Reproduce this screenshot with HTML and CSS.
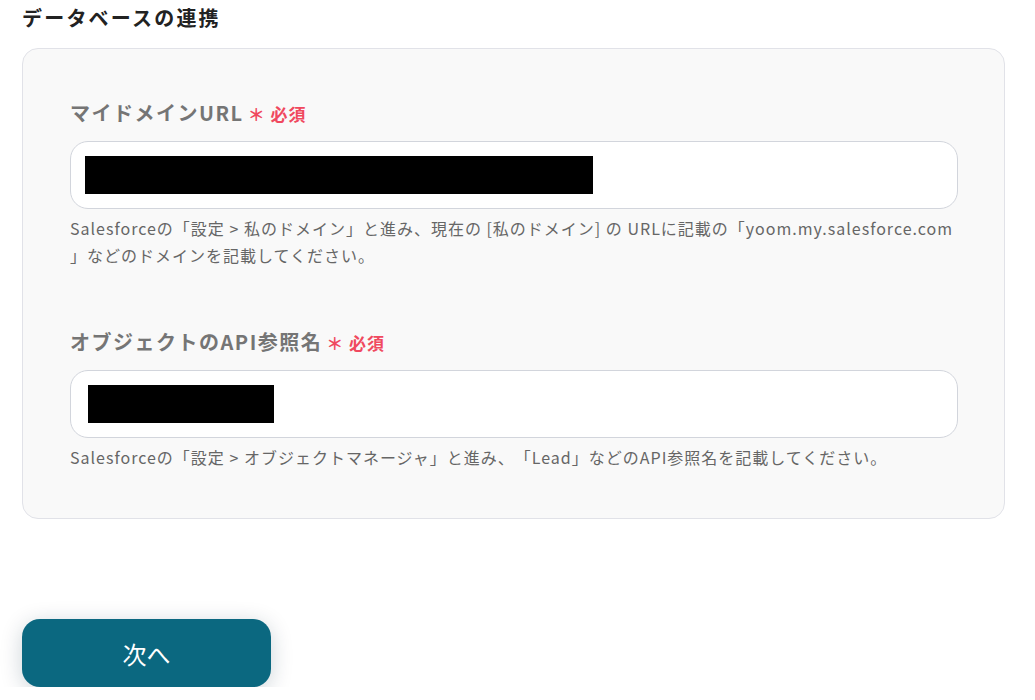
FILE: index.html
```html
<!DOCTYPE html>
<html lang="ja">
<head>
    <meta charset="UTF-8">
    <meta name="viewport" content="width=device-width, initial-scale=1.0">
    <title>データベースの連携</title>
    <link rel="stylesheet" href="styles.css">
</head>
<body>
    <div class="page">
        <h2 class="section_title">データベースの連携</h2>
        <div class="form_card">
            <div class="field">
                <label class="field_label">マイドメインURL<span class="required">＊ 必須</span></label>
                <div class="input_box"><span class="masked masked_long"></span></div>
                <p class="help">Salesforceの「設定 &gt; 私のドメイン」と進み、現在の [私のドメイン] の URLに記載の「yoom.my.salesforce.com 」などのドメインを記載してください。</p>
            </div>
            <div class="field">
                <label class="field_label">オブジェクトのAPI参照名<span class="required">＊ 必須</span></label>
                <div class="input_box"><span class="masked masked_short"></span></div>
                <p class="help">Salesforceの「設定 &gt; オブジェクトマネージャ」と進み、「Lead」などのAPI参照名を記載してください。</p>
            </div>
        </div>
        <button class="next_btn">次へ</button>
    </div>
</body>
</html>
```

FILE: styles.css
```css
*{
    margin: 0;
    box-sizing: border-box;
}
body{
    font-family: "Noto Sans CJK JP", sans-serif;
    background-color: #fff;
    color: #222;
    text-spacing-trim: space-all;
}
.page{
    padding: 4px 30px 0 22px;
}
.section_title{
    font-size: 20px;
    letter-spacing: 2.2px;
    line-height: 28px;
    font-weight: bold;
    color: #222;
    margin-bottom: 16px;
}
.form_card{
    display: flex;
    flex-direction: column;
    gap: 59px;
    background-color: #f9f9f9;
    border: 1px solid #e1e2e8;
    border-radius: 16px;
    padding: 50px 46px 47px 47px;
}
.field{
    display: flex;
    flex-direction: column;
}
.field_label{
    font-size: 20px;
    letter-spacing: 1.5px;
    line-height: 28px;
    font-weight: bold;
    color: #757575;
    margin-bottom: 13px;
}
.required{
    font-size: 17px;
    letter-spacing: 1px;
    color: #f0495f;
    margin-left: 4px;
}
.input_box{
    height: 68px;
    background-color: #fff;
    border: 1px solid #d2d5dc;
    border-radius: 18px;
    display: flex;
    align-items: center;
    padding-left: 14px;
}
.masked{
    display: block;
    height: 38px;
    background-color: #000;
}
.masked_long{
    width: 508px;
}
.masked_short{
    width: 186px;
    margin-left: 3px;
}
.help{
    font-size: 16px;
    letter-spacing: 1px;
    line-height: 27px;
    color: #666;
    margin-top: 6px;
}
.next_btn{
    display: block;
    margin-top: 100px;
    width: 249px;
    height: 68px;
    border: none;
    border-radius: 18px;
    background-color: #0b6880;
    color: #fff;
    font-family: "Noto Sans CJK JP", sans-serif;
    font-size: 24px;
    box-shadow: 0 4px 22px rgba(0, 40, 60, 0.2);
}
```
